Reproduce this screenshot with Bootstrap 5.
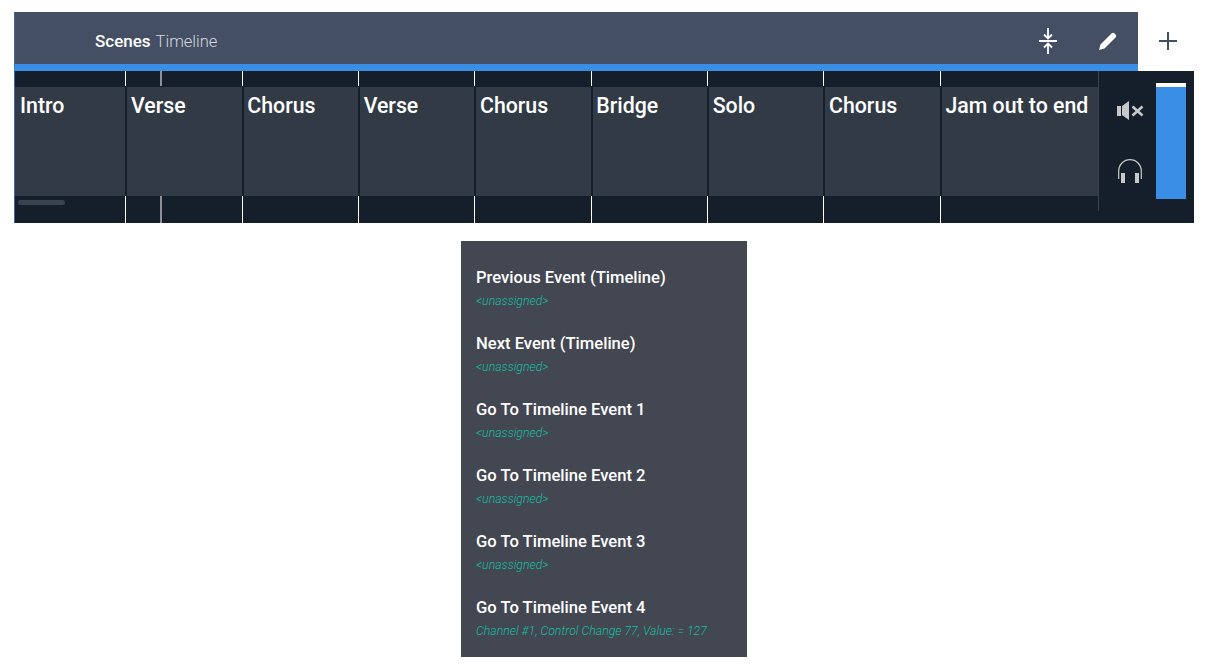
<!DOCTYPE html>
<html lang="en">
<head>
<meta charset="utf-8">
<title>Scenes Timeline</title>
<link href="https://cdn.jsdelivr.net/npm/bootstrap@5.3.0/dist/css/bootstrap.min.css" rel="stylesheet">
<style>
html,body{background:#fff;font-family:Roboto,"Liberation Sans",sans-serif;height:668px;overflow:hidden}
.stage{padding:12px 12px 0 14px;width:1206px}
.head-row{height:59px}
.head-bar{width:1124px;height:59px;background:#444f63;border-bottom:7px solid #3a8ee6;border-left:1px solid #3d6a9e;padding-left:80px;padding-top:6px;color:#fff}
.head-title{font-size:17px;font-weight:500;line-height:20px}
.head-sub{font-size:16.500px;font-weight:300;color:#d4d8e0;margin-left:5px;line-height:20px}
.head-btn{width:60px;height:46px}
.plus-wrap{width:56px;height:52px;padding:6px 0 0 4px}
.panel{width:1180px;height:152px;background:#151f2b;border-left:1px solid #3d6a9e}
.track{width:1083px;height:152px}
.seg{flex:none;height:152px}
.seg-tick{height:15px;margin-bottom:1px;border-left:1px solid #fff}
.seg-tick.end{height:27px;margin-bottom:0}
.seg-body{height:109px;background:#323b45;border-left:2px solid #151f2b;color:#fff;font-size:21.300px;font-weight:500;line-height:26px;padding:6px 0 0 3.700px;white-space:nowrap;overflow:hidden}
.seg.first .seg-tick{border-left-color:transparent}
.seg.first .seg-body{border-left:0;padding-left:5px}
.playhead{position:absolute;top:0;height:15px;left:145px;width:2px;background:#8d9197}
.playhead.low{top:125px;height:27px}
.scroll-thumb{position:absolute;left:3px;top:129px;width:47px;height:5px;border-radius:3px;background:#3a434d}
.side{width:96px;height:152px}
.side-icons{width:58px;height:140px;border-left:1px solid #39424d;padding-left:5px}
.icon-mute{margin-top:30px}
.icon-phones{margin-top:39px}
.meter{width:30px;height:116px;margin-top:12px;background:#3a8ee6;border-top:4px solid #fff}
.map-wrap{margin-top:18px;padding-left:447px}
.map-box{width:286px;height:416px;background:#434751;padding:3px 15px 0}
.map-item{height:66px;padding-top:24px}
.map-name{color:#fff;font-size:16.600px;font-weight:500;line-height:20px}
.map-val{color:#14bfa5;font-size:12.300px;font-weight:300;font-style:italic;line-height:14px;margin-top:6px;white-space:nowrap}
</style>
</head>
<body>
<div class="stage">
  <div class="d-flex head-row">
    <div class="head-bar d-flex align-items-center">
      <div class="d-flex align-items-baseline"><span class="head-title">Scenes</span><span class="head-sub">Timeline</span></div>
      <div class="ms-auto d-flex">
        <div class="head-btn d-flex align-items-center justify-content-center">
          <svg width="18" height="28" viewBox="0 0 18 28" fill="none" stroke="#fff" stroke-width="1.800"><path d="M0 14H18" stroke-width="2"/><path d="M9 1V11M5 7.500L9 11.500L13 7.500"/><path d="M9 27V17M5 20.500L9 16.500L13 20.500"/></svg>
        </div>
        <div class="head-btn d-flex align-items-center justify-content-center">
          <svg width="18" height="18" viewBox="0 0 18 18" fill="#fff"><path d="M0 18L1.500 12.500L12.500 1.500Q14 0 15.500 1.500L16.500 2.500Q18 4 16.500 5.500L5.500 16.500Z"/></svg>
        </div>
      </div>
    </div>
    <div class="plus-wrap d-flex align-items-center justify-content-center">
      <svg width="18" height="18" viewBox="0 0 18 18" stroke="#434e64" stroke-width="2"><path d="M9 0V18M0 9H18"/></svg>
    </div>
  </div>
  <div class="panel d-flex">
    <div class="track d-flex position-relative">
      <div class="seg first" style="width:110.300px"><div class="seg-tick"></div><div class="seg-body">Intro</div><div class="seg-tick end"></div></div>
      <div class="seg" style="width:116.350px"><div class="seg-tick"></div><div class="seg-body">Verse</div><div class="seg-tick end"></div></div>
      <div class="seg" style="width:116.350px"><div class="seg-tick"></div><div class="seg-body">Chorus</div><div class="seg-tick end"></div></div>
      <div class="seg" style="width:116.350px"><div class="seg-tick"></div><div class="seg-body">Verse</div><div class="seg-tick end"></div></div>
      <div class="seg" style="width:116.350px"><div class="seg-tick"></div><div class="seg-body">Chorus</div><div class="seg-tick end"></div></div>
      <div class="seg" style="width:116.350px"><div class="seg-tick"></div><div class="seg-body">Bridge</div><div class="seg-tick end"></div></div>
      <div class="seg" style="width:116.350px"><div class="seg-tick"></div><div class="seg-body">Solo</div><div class="seg-tick end"></div></div>
      <div class="seg" style="width:116.350px"><div class="seg-tick"></div><div class="seg-body">Chorus</div><div class="seg-tick end"></div></div>
      <div class="seg" style="width:158.250px"><div class="seg-tick"></div><div class="seg-body">Jam out to end</div><div class="seg-tick end"></div></div>
      <div class="playhead"></div>
      <div class="playhead low"></div>
      <div class="scroll-thumb"></div>
    </div>
    <div class="side d-flex">
      <div class="side-icons d-flex flex-column align-items-center">
        <svg class="icon-mute" width="27" height="19" viewBox="0 0 27 19"><path d="M0 5H4V15H0Z" fill="#c8c8c8"/><path d="M5 5L12 0V19L5 14Z" fill="#c8c8c8"/><path d="M15.500 5.500L25.500 14.500M25.500 5.500L15.500 14.500" stroke="#c8c8c8" stroke-width="2.600" fill="none"/></svg>
        <svg class="icon-phones" width="24" height="24" viewBox="0 0 24 24"><path d="M.7 20V12A11.300 11.300 0 0 1 23.300 12V20" fill="none" stroke="#c8c8c8" stroke-width="1.200"/><rect x="3" y="14" width="4" height="10" fill="#c8c8c8"/><rect x="17" y="14" width="4" height="10" fill="#c8c8c8"/></svg>
      </div>
      <div class="meter"></div>
    </div>
  </div>
  <div class="map-wrap d-flex">
    <div class="map-box">
      <div class="map-item"><div class="map-name">Previous Event (Timeline)</div><div class="map-val">&lt;unassigned&gt;</div></div>
      <div class="map-item"><div class="map-name">Next Event (Timeline)</div><div class="map-val">&lt;unassigned&gt;</div></div>
      <div class="map-item"><div class="map-name">Go To Timeline Event 1</div><div class="map-val">&lt;unassigned&gt;</div></div>
      <div class="map-item"><div class="map-name">Go To Timeline Event 2</div><div class="map-val">&lt;unassigned&gt;</div></div>
      <div class="map-item"><div class="map-name">Go To Timeline Event 3</div><div class="map-val">&lt;unassigned&gt;</div></div>
      <div class="map-item"><div class="map-name">Go To Timeline Event 4</div><div class="map-val">Channel #1, Control Change 77, Value: = 127</div></div>
    </div>
  </div>
</div>
<script src="https://cdn.jsdelivr.net/npm/bootstrap@5.3.0/dist/js/bootstrap.bundle.min.js"></script>
</body>
</html>
